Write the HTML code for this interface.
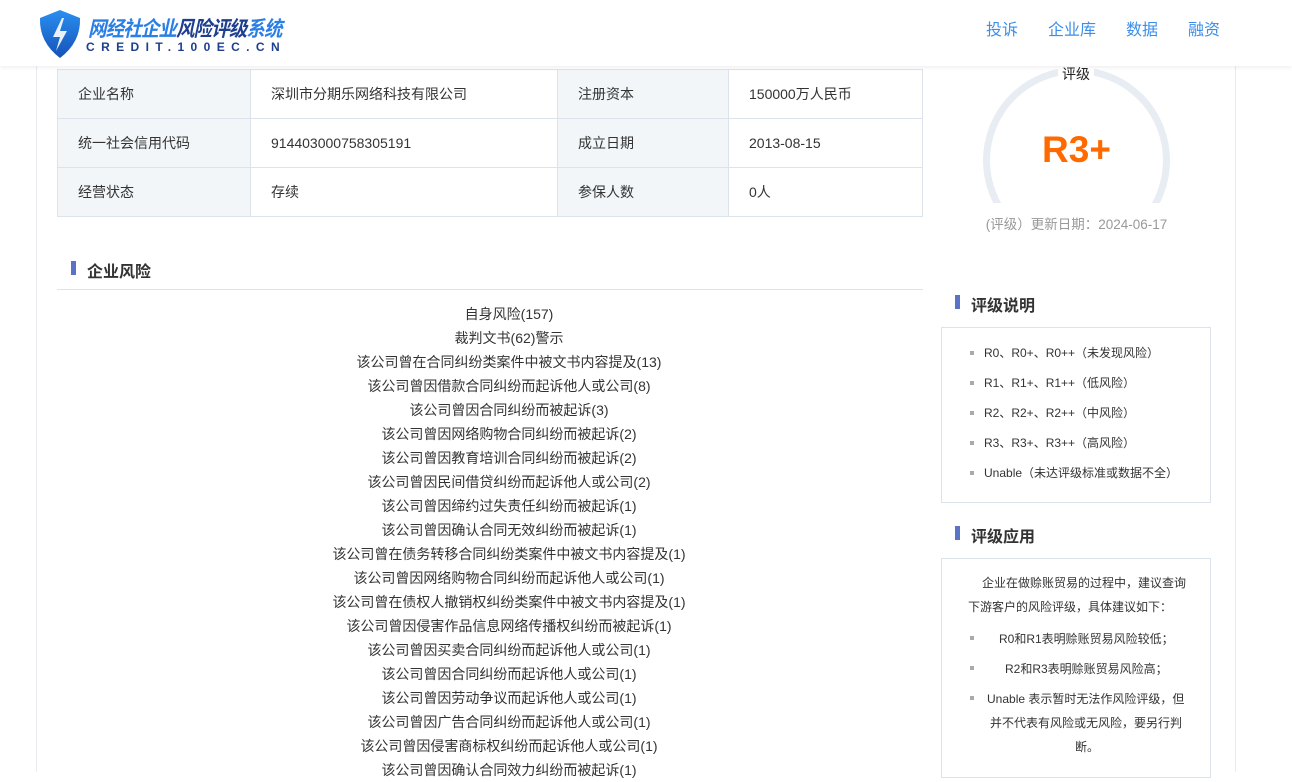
<!DOCTYPE html>
<html><head><meta charset="utf-8"><style>
*{margin:0;padding:0;box-sizing:border-box}
body{width:1292px;height:772px;overflow:hidden;background:#fff;font-family:"Liberation Sans","Noto Sans CJK SC",sans-serif;color:#333;position:relative}
.hdr{position:absolute;left:0;top:0;width:1292px;height:66px;background:#fff;box-shadow:0 2px 4px rgba(0,0,0,.06);z-index:2}
.nav{position:absolute;top:16px;font-size:16px;color:#3d8ee8}
.wrap{position:absolute;left:36px;top:66px;width:1200px;height:706px;border-left:1px solid #e8ebef;border-right:1px solid #e8ebef}
table{position:absolute;left:57px;top:69px;width:866px;border-collapse:collapse;font-size:14px}
td{border:1px solid #dde3ea;height:49px;padding-left:20px}
td.l{background:#f3f6f9}
.tt{position:absolute;font-size:16px;font-weight:bold;color:#333}
.tt:before{content:"";position:absolute;left:-16px;top:3px;width:5px;height:14px;background:#5b73c7}
.risk{position:absolute;left:76px;top:302px;width:866px;text-align:center;font-size:14px;line-height:24px;color:#333}
.box{position:absolute;left:941px;width:270px;border:1px solid #dde3ea;font-size:12px;color:#333}
.box li{list-style:none;position:relative}
.box li:before{content:"";position:absolute;left:-14px;top:13px;width:4px;height:4px;background:#aaa}
.ab{position:absolute;font-size:12px;color:#333;white-space:nowrap}
.bl{position:absolute;left:970px;width:4px;height:4px;background:#aaa}
</style></head><body>
<div class="hdr">
<svg style="position:absolute;left:38px;top:9px" width="44" height="50" viewBox="0 0 44 50"><defs><linearGradient id="g" x1="0" y1="0" x2="0" y2="1"><stop offset="0" stop-color="#2a8ff0"/><stop offset="1" stop-color="#1552b8"/></linearGradient></defs><path d="M22 1 L42 9 Q43 33 22 49 Q1 33 2 9 Z" fill="url(#g)"/><path d="M24 9 L15 28 L22 28 L18 42 L29 22 L22 22 L26 9 Z" fill="#fff" opacity=".9"/></svg>
<div style="position:absolute;left:88px;top:13px;font-size:21px;font-weight:bold;font-style:italic;color:#2a7fe6;letter-spacing:-1px;transform:scaleX(0.88);transform-origin:left;white-space:nowrap">网经社企业<span style="color:#1e3f8e">风险评级</span>系统</div>
<div style="position:absolute;left:86px;top:40px;font-size:12px;letter-spacing:6.4px;color:#1e3f8e;font-weight:bold">CREDIT.100EC.CN</div>
<div class="nav" style="left:986px">投诉</div><div class="nav" style="left:1048px">企业库</div><div class="nav" style="left:1126px">数据</div><div class="nav" style="left:1188px">融资</div>
</div>
<div class="wrap"></div>
<table>
<tr><td class="l" style="width:193px">企业名称</td><td style="width:307px">深圳市分期乐网络科技有限公司</td><td class="l" style="width:171px">注册资本</td><td>150000万人民币</td></tr>
<tr><td class="l">统一社会信用代码</td><td>914403000758305191</td><td class="l">成立日期</td><td>2013-08-15</td></tr>
<tr><td class="l">经营状态</td><td>存续</td><td class="l">参保人数</td><td>0人</td></tr>
</table>
<div style="position:absolute;left:983px;top:67px;width:187px;height:136px;overflow:hidden"><div style="width:187px;height:187px;border:7px solid #e8edf3;border-radius:50%"></div></div>
<div style="position:absolute;left:1058px;top:64px;background:#fff;padding:0 4px;font-size:14px;color:#222">评级</div>
<div style="position:absolute;left:983px;top:129px;width:187px;text-align:center;font-size:37px;font-weight:bold;color:#ff6a00">R3+</div>
<div style="position:absolute;left:983px;top:213px;width:187px;text-align:center;font-size:13.5px;color:#999;white-space:nowrap">(评级）更新日期：2024-06-17</div>
<div class="tt" style="left:87px;top:258px">企业风险</div>
<div style="position:absolute;left:57px;top:289px;width:866px;height:1px;background:#e0e4ea"></div>
<div class="risk">自身风险(157)<br>裁判文书(62)警示<br>该公司曾在合同纠纷类案件中被文书内容提及(13)<br>该公司曾因借款合同纠纷而起诉他人或公司(8)<br>该公司曾因合同纠纷而被起诉(3)<br>该公司曾因网络购物合同纠纷而被起诉(2)<br>该公司曾因教育培训合同纠纷而被起诉(2)<br>该公司曾因民间借贷纠纷而起诉他人或公司(2)<br>该公司曾因缔约过失责任纠纷而被起诉(1)<br>该公司曾因确认合同无效纠纷而被起诉(1)<br>该公司曾在债务转移合同纠纷类案件中被文书内容提及(1)<br>该公司曾因网络购物合同纠纷而起诉他人或公司(1)<br>该公司曾在债权人撤销权纠纷类案件中被文书内容提及(1)<br>该公司曾因侵害作品信息网络传播权纠纷而被起诉(1)<br>该公司曾因买卖合同纠纷而起诉他人或公司(1)<br>该公司曾因合同纠纷而起诉他人或公司(1)<br>该公司曾因劳动争议而起诉他人或公司(1)<br>该公司曾因广告合同纠纷而起诉他人或公司(1)<br>该公司曾因侵害商标权纠纷而起诉他人或公司(1)<br>该公司曾因确认合同效力纠纷而被起诉(1)</div>
<div class="tt" style="left:971px;top:292px">评级说明</div>
<div class="box" style="top:327px;height:176px;padding:10px 0 0 42px;line-height:30px">
<ul><li>R0、R0+、R0++（未发现风险）</li><li>R1、R1+、R1++（低风险）</li><li>R2、R2+、R2++（中风险）</li><li>R3、R3+、R3++（高风险）</li><li>Unable（未达评级标准或数据不全）</li></ul></div>
<div class="tt" style="left:971px;top:523px">评级应用</div>
<div class="box" style="top:558px;height:220px"></div>
<div class="ab" style="left:982px;top:574px">企业在做赊账贸易的过程中，建议查询</div>
<div class="ab" style="left:968px;top:598px">下游客户的风险评级，具体建议如下：</div>
<div class="bl" style="top:636px"></div><div class="ab" style="left:999px;top:630px">R0和R1表明赊账贸易风险较低；</div>
<div class="bl" style="top:666px"></div><div class="ab" style="left:1005px;top:660px">R2和R3表明赊账贸易风险高；</div>
<div class="bl" style="top:696px"></div><div class="ab" style="left:987px;top:690px">Unable 表示暂时无法作风险评级，但</div>
<div class="ab" style="left:990px;top:714px">并不代表有风险或无风险，要另行判</div>
<div class="ab" style="left:1075px;top:738px">断。</div>
</body></html>
